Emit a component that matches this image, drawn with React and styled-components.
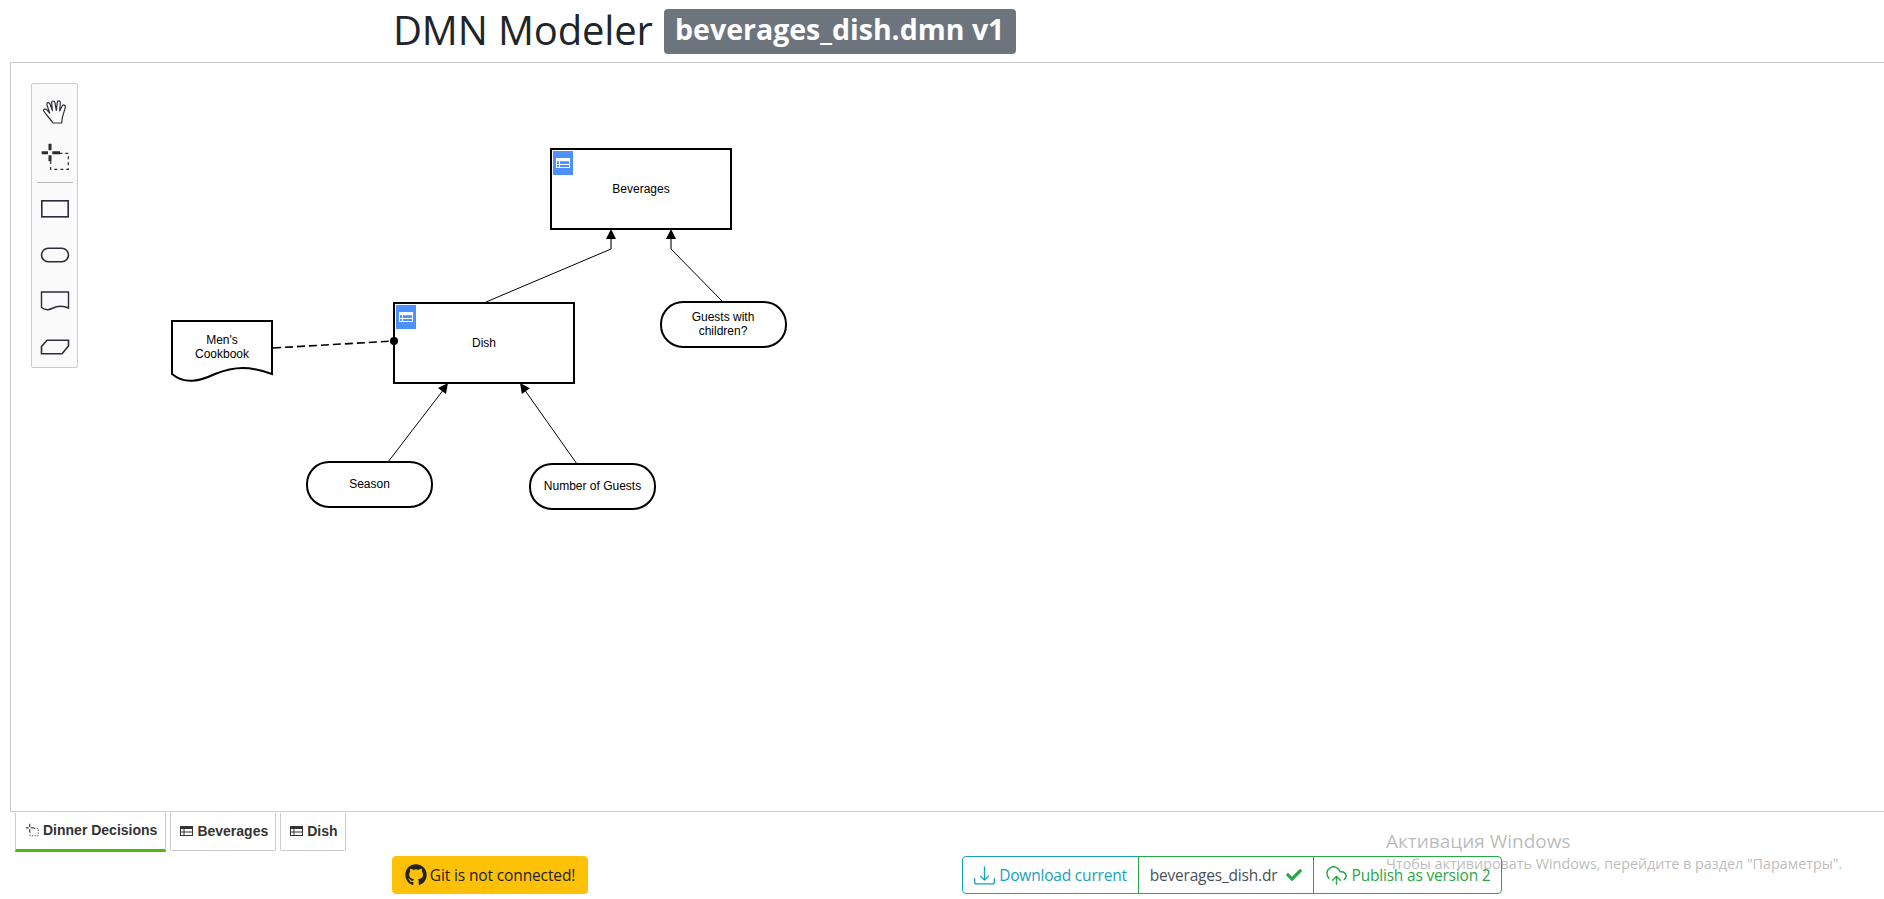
import React from 'react'
import styled, { createGlobalStyle } from 'styled-components'
import { FaGithub, FaCheck } from 'react-icons/fa'
import { BsDownload } from 'react-icons/bs'
import { CloudUpload } from 'lucide-react'

const GlobalStyle = createGlobalStyle`
  html, body {
    margin: 0;
    padding: 0;
    background: #fff;
    overflow: hidden;
  }
  body {
    font-family: "Open Sans", "Noto Sans", sans-serif;
    color: #212529;
  }
`

const Page = styled.div`
  width: 1884px;
  height: 899px;
  display: flex;
  flex-direction: column;
  position: relative;
  overflow: hidden;
`

const Header = styled.header`
  height: 62px;
  box-sizing: border-box;
  padding: 9px 0 0 393px;
  display: flex;
  align-items: flex-start;
  gap: 11px;
`

const Title = styled.h1`
  margin: 0;
  font-size: 40px;
  line-height: 41px;
  font-weight: 400;
  letter-spacing: -0.15px;
  white-space: nowrap;
`

const Badge = styled.span`
  height: 45px;
  width: 352px;
  box-sizing: border-box;
  border-radius: 4px;
  background: #6c757d;
  color: #fff;
  font-size: 28.5px;
  font-weight: 700;
  line-height: 41px;
  text-align: center;
  white-space: nowrap;
`

const Canvas = styled.section`
  position: relative;
  height: 750px;
  margin-left: 10px;
  box-sizing: border-box;
  border: 1px solid #ccc;
  border-right: none;
`

const Palette = styled.div`
  position: absolute;
  left: 20px;
  top: 20px;
  width: 47px;
  height: 285px;
  padding-top: 6px;
  box-sizing: border-box;
  background: #fafafa;
  border: 1px solid #ccc;
  border-radius: 2px;
  display: flex;
  flex-direction: column;
  align-items: center;
`

const PaletteSlot = styled.div`
  height: ${(p) => p.$h}px;
  flex-shrink: 0;
  width: 100%;
  display: flex;
  align-items: center;
  justify-content: center;
`

const PaletteSeparator = styled.hr`
  width: 36px;
  flex-shrink: 0;
  margin: 0 0 3px;
  border: none;
  border-top: 1px solid #b9b9b9;
`

const Diagram = styled.svg`
  display: block;
  width: 100%;
  height: 100%;
`

const NodeLabel = styled.text`
  font-family: "Liberation Sans", Arial, sans-serif;
  font-size: 12px;
  fill: #000;
  text-anchor: middle;
`

const Tabs = styled.nav`
  height: 40px;
  padding: 1px 0 0 15px;
  display: flex;
  gap: 4px;
  box-sizing: border-box;
`

const Tab = styled.div`
  height: ${(p) => (p.$active ? 39 : 38)}px;
  box-sizing: border-box;
  padding: 0 ${(p) => (p.$active ? 8 : 7)}px 2px 9px;
  display: flex;
  align-items: center;
  gap: 4px;
  font-family: "Liberation Sans", Arial, sans-serif;
  font-size: 14px;
  font-weight: 700;
  color: #333;
  background: #fff;
  border: 1px solid #ccc;
  border-top: none;
  border-radius: ${(p) => (p.$active ? 0 : '0 0 2px 2px')};
  ${(p) => p.$active && 'border-bottom: 3px solid #52b415;'}
`

const Footer = styled.footer`
  margin-top: 4px;
  padding-left: 392px;
  display: flex;
  align-items: flex-start;
`

const GitButton = styled.button`
  width: 196px;
  height: 38px;
  box-sizing: border-box;
  padding: 0;
  display: flex;
  align-items: center;
  justify-content: center;
  gap: 3px;
  font: inherit;
  font-size: 15.5px;
  letter-spacing: -0.13px;
  color: #212529;
  background: #ffc107;
  border: 1px solid #ffc107;
  border-radius: 4px;
`

const ButtonGroup = styled.div`
  margin-left: 374px;
  display: flex;
`

const GroupButton = styled.button`
  width: ${(p) => p.$w}px;
  height: 38px;
  box-sizing: border-box;
  padding: 0;
  margin-left: ${(p) => (p.$first ? 0 : -1)}px;
  display: flex;
  align-items: center;
  justify-content: center;
  gap: 4px;
  font: inherit;
  font-size: 15.5px;
  letter-spacing: -0.2px;
  white-space: nowrap;
  background: #fff;
  color: ${(p) => p.$color};
  border: 1px solid ${(p) => p.$border};
  border-radius: ${(p) => p.$radius};
`

const FileName = styled.span`
  color: #495057;
`

const CheckMark = styled(FaCheck)`
  margin-left: 5px;
  color: #28a745;
`

const Activation = styled.div`
  position: absolute;
  left: 1386px;
  top: 829px;
  color: rgba(130, 130, 130, 0.55);
  font-family: "Open Sans", sans-serif;
  pointer-events: none;
  white-space: nowrap;
`

const ActivationTitle = styled.div`
  font-size: 19px;
  line-height: 25px;
`

const ActivationText = styled.div`
  font-size: 14.35px;
  line-height: 18px;
  margin-top: 1px;
`

const paletteInk = '#2b2b3a'

const TableIcon = ({ x, y }) => (
  <g transform={`translate(${x} ${y})`}>
    <rect width="20" height="24" fill="#4d90ff" />
    <rect x="3" y="7" width="14" height="3.2" fill="#fff" />
    <rect x="3.5" y="7.5" width="13" height="9" fill="none" stroke="#fff" strokeWidth="1" />
    <path d="M3 13.5h14M6.5 10v7" stroke="#fff" strokeWidth="1" fill="none" />
  </g>
)

const TabTableIcon = () => (
  <svg width="13" height="10" viewBox="0 0 13 10">
    <rect width="13" height="10" fill="#333" />
    <path d="M1 3h2.5v2.5H1zM4.5 3h7.5v2.5H4.5zM1 6.5h2.5v2.5H1zM4.5 6.5h7.5v2.5H4.5z" fill="#fff" />
  </svg>
)

const HandIcon = () => (
  <svg width="24" height="25" viewBox="70 70 72 75">
    <path
      d="M100 142C92 130 80 118 72 106C70 100 78 98 83 104L90 112L82 88C80 80 88 78 91 85L98 105L96 82C95 74 104 74 106 82L110 104L113 80C114 73 122 74 122 82L120 106L127 92C130 85 138 88 137 95L128 125L126 142Z"
      fill="#fff"
      stroke={paletteInk}
      strokeWidth="3.6"
      strokeLinejoin="round"
    />
  </svg>
)

const LassoIcon = ({ size = 30, color = paletteInk, thick = 9, dash = 3.6 }) => (
  <svg width={size} height={size} viewBox="60 200 90 90">
    <path d="M65 232h19M97 232h23M90 205v20M90 240v18" stroke={color} strokeWidth={thick} fill="none" />
    <path d="M118 234H145V282H92V258" stroke={color} strokeWidth={dash} strokeDasharray="9 9" fill="none" />
  </svg>
)

const RectTool = () => (
  <svg width="30" height="20" viewBox="0 0 30 20">
    <rect x="1.8" y="1.8" width="26.4" height="16" fill="none" stroke={paletteInk} strokeWidth="1.6" />
  </svg>
)

const InputTool = () => (
  <svg width="30" height="16" viewBox="0 0 30 16">
    <rect x="1.5" y="1.2" width="27" height="13.6" rx="6.8" fill="none" stroke={paletteInk} strokeWidth="1.6" />
  </svg>
)

const KnowledgeTool = () => (
  <svg width="30" height="20" viewBox="0 0 30 20">
    <path d="M1.5 1H28.5V17C22 14 17 15 12 17.5C8 19.5 4 18.5 1.5 16.5Z" fill="none" stroke={paletteInk} strokeWidth="1.4" />
  </svg>
)

const ModelTool = () => (
  <svg width="30" height="16" viewBox="0 0 30 16">
    <path d="M7 1.2H28.5V7L22 14.8H1.5V7.5Z" fill="none" stroke={paletteInk} strokeWidth="1.6" />
  </svg>
)

const Arrow = ({ x, y, angle = 0 }) => (
  <path d={`M${x} ${y}l-5 10h10z`} fill="#000" transform={`rotate(${angle} ${x} ${y})`} />
)

const shapeProps = { fill: '#fff', stroke: '#000', strokeWidth: 2 }

// page coordinates, the svg sits 11px/63px inside the page
const Drd = () => (
  <Diagram>
    <g transform="translate(-11 -63)">
      <path d="M486 302L611 249V239" fill="none" stroke="#000" strokeWidth="1" />
      <path d="M723 302L671 249V239" fill="none" stroke="#000" strokeWidth="1" />
      <path d="M611 249V239M671 249V239" stroke="#777" strokeWidth="2" />
      <Arrow x={611} y={229} />
      <Arrow x={671} y={229} />
      <path d="M388 462L444 389" stroke="#000" />
      <Arrow x={448} y={383} angle={37} />
      <path d="M577 464L524 389" stroke="#000" />
      <Arrow x={520} y={383} angle={-36} />
      <path d="M273 348L394 341" stroke="#000" strokeWidth="1.6" strokeDasharray="8 4" />

      <rect x="551" y="149" width="180" height="80" {...shapeProps} />
      <TableIcon x={553} y={151} />
      <NodeLabel x="641" y="193">Beverages</NodeLabel>

      <rect x="394" y="303" width="180" height="80" {...shapeProps} />
      <TableIcon x={396} y={305} />
      <NodeLabel x="484" y="347">Dish</NodeLabel>
      <circle cx="394" cy="341" r="4" fill="#000" />

      <rect x="661" y="302" width="125" height="45" rx="22" {...shapeProps} />
      <NodeLabel x="723" y="321">Guests with</NodeLabel>
      <NodeLabel x="723" y="335">children?</NodeLabel>

      <rect x="307" y="462" width="125" height="45" rx="22" {...shapeProps} />
      <NodeLabel x="369.5" y="488">Season</NodeLabel>

      <rect x="530" y="464" width="125" height="45" rx="22" {...shapeProps} />
      <NodeLabel x="592.5" y="490">Number of Guests</NodeLabel>

      <path d="M172 321H272V374C250 366 235 366 215 374C200 381 185 385 172 374Z" {...shapeProps} />
      <NodeLabel x="222" y="344">Men's</NodeLabel>
      <NodeLabel x="222" y="358">Cookbook</NodeLabel>
    </g>
  </Diagram>
)

const App = () => (
  <Page>
    <GlobalStyle />
    <Header>
      <Title>DMN Modeler</Title>
      <Badge>beverages_dish.dmn v1</Badge>
    </Header>
    <Canvas>
      <Drd />
      <Palette>
        <PaletteSlot $h={42}><HandIcon /></PaletteSlot>
        <PaletteSlot $h={50}><LassoIcon /></PaletteSlot>
        <PaletteSeparator />
        <PaletteSlot $h={46}><RectTool /></PaletteSlot>
        <PaletteSlot $h={46}><InputTool /></PaletteSlot>
        <PaletteSlot $h={46}><KnowledgeTool /></PaletteSlot>
        <PaletteSlot $h={46}><ModelTool /></PaletteSlot>
      </Palette>
    </Canvas>
    <Tabs>
      <Tab $active><LassoIcon size={14} color="#445" thick={8} dash={6} /> Dinner Decisions</Tab>
      <Tab><TabTableIcon /> Beverages</Tab>
      <Tab><TabTableIcon /> Dish</Tab>
    </Tabs>
    <Footer>
      <GitButton><FaGithub size={22} /> Git is not connected!</GitButton>
      <ButtonGroup>
        <GroupButton $first $w={177} $color="#17a2b8" $border="#17a2b8" $radius="4px 0 0 4px">
          <BsDownload size={21} /> Download current
        </GroupButton>
        <GroupButton $w={176} $color="#495057" $border="#28a745" $radius="0">
          <FileName>beverages_dish.dr</FileName> <CheckMark size={16} />
        </GroupButton>
        <GroupButton $w={189} $color="#28a745" $border="#28a745" $radius="0 4px 4px 0">
          <CloudUpload size={23} strokeWidth={1.5} /> Publish as version 2
        </GroupButton>
      </ButtonGroup>
    </Footer>
    <Activation>
      <ActivationTitle>Активация Windows</ActivationTitle>
      <ActivationText>Чтобы активировать Windows, перейдите в раздел "Параметры".</ActivationText>
    </Activation>
  </Page>
)

export default App
